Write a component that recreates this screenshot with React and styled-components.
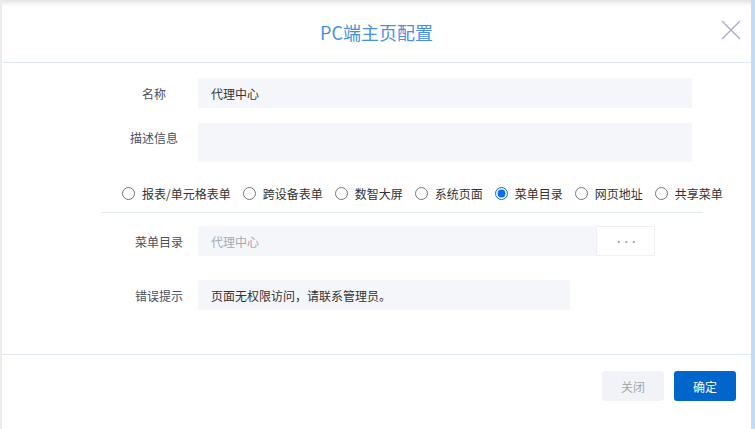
import React from 'react'
import styled, { createGlobalStyle } from 'styled-components'

const GlobalStyle = createGlobalStyle`
  html, body {
    margin: 0;
    padding: 0;
    background: #c3dbf3;
  }
  body {
    font-family: "Noto Sans CJK SC", "Noto Sans", sans-serif;
    font-size: 12px;
    color: #333;
  }
`

const Page = styled.div`
  width: 755px;
  height: 429px;
  display: flex;
  overflow: hidden;
`

const Dialog = styled.div`
  margin-left: 2px;
  width: 749px;
  height: 429px;
  display: flex;
  flex-direction: column;
  background: linear-gradient(#e4e4e4 0, #fafafa 5px, #fff 7px);
  box-shadow: -2px 0 0 #ececec;
`

const Header = styled.div`
  height: 62px;
  flex: none;
  display: flex;
  align-items: center;
  justify-content: center;
  position: relative;
  border-bottom: 1px solid #e2e8f0;
`

const Title = styled.div`
  font-size: 18px;
  color: #4a90e2;
  padding-top: 2px;
`

const Close = styled.button`
  position: absolute;
  right: 10px;
  top: 20px;
  width: 20px;
  height: 20px;
  padding: 0;
  border: 0;
  background: none;
  cursor: pointer;
`

const Body = styled.div`
  flex: 1;
  padding-top: 15px;
  border-bottom: 1px solid #e2e8f0;
`

const Row = styled.div`
  display: flex;
  align-items: ${p => (p.$top ? 'flex-start' : 'center')};
  margin-bottom: ${p => p.$gap || 0}px;
`

const Label = styled.div`
  width: ${p => p.$w}px;
  flex: none;
  text-align: right;
  color: #4a4f5c;
  padding-right: ${p => p.$pr}px;
  padding-top: ${p => (p.$top ? 6 : 0)}px;
  box-sizing: border-box;
`

const Field = styled.div`
  width: ${p => p.$w}px;
  height: ${p => p.$h || 30}px;
  box-sizing: border-box;
  background: #f5f6fa;
  border-radius: 2px;
  padding: 0 13px;
  display: flex;
  align-items: center;
  color: ${p => (p.$muted ? '#a6a9b0' : '#333')};
`

const Picker = styled.div`
  display: flex;
`

const PickButton = styled.div`
  width: 59px;
  height: 30px;
  box-sizing: border-box;
  border: 1px solid #eef0f4;
  background: #fff;
  display: flex;
  align-items: center;
  justify-content: center;
  color: #8f95a3;
  font-size: 9px;
  letter-spacing: -1.5px;
`

const Radios = styled.div`
  display: flex;
  align-items: center;
  margin: 0 48px 13px 100px;
  padding: 23px 0 10px 20px;
  border-bottom: 1px solid #e2e8f0;
`

const RadioItem = styled.label`
  display: flex;
  align-items: center;
  margin-right: 12px;
  white-space: nowrap;
  color: #333;
`

const Radio = styled.input`
  width: 13px;
  height: 13px;
  margin: 0 7px 0 0;
  accent-color: #0a6cf0;
`

const Footer = styled.div`
  height: 74px;
  flex: none;
  display: flex;
  justify-content: flex-end;
  align-items: flex-start;
  padding: 16px 15px 0 0;
  box-sizing: border-box;
  gap: 10px;
`

const Button = styled.button`
  width: 62px;
  height: 30px;
  border: 0;
  border-radius: 3px;
  font-family: inherit;
  font-size: 12px;
  background: ${p => (p.$primary ? '#0066cc' : '#f2f3f7')};
  color: ${p => (p.$primary ? '#fff' : '#a5a8ae')};
`

const types = ['报表/单元格表单', '跨设备表单', '数智大屏', '系统页面', '菜单目录', '网页地址', '共享菜单']

export default function App() {
  return (
    <>
      <GlobalStyle />
      <Page>
        <Dialog>
          <Header>
            <Title>PC端主页配置</Title>
            <Close aria-label="close">
              <svg width="20" height="20" viewBox="0 0 20 20">
                <path d="M1 1L19 19M19 1L1 19" stroke="#a7a7cb" strokeWidth="1.3" fill="none" />
              </svg>
            </Close>
          </Header>
          <Body>
            <Row $gap={15}>
              <Label $w={196} $pr={32}>名称</Label>
              <Field $w={494}>代理中心</Field>
            </Row>
            <Row $top>
              <Label $w={196} $pr={20} $top>描述信息</Label>
              <Field $w={494} $h={39} />
            </Row>
            <Radios>
              {types.map(t => (
                <RadioItem key={t}>
                  <Radio type="radio" name="type" readOnly checked={t === '菜单目录'} />
                  {t}
                </RadioItem>
              ))}
            </Radios>
            <Row $gap={24}>
              <Label $w={196} $pr={15}>菜单目录</Label>
              <Picker>
                <Field $w={398} $muted>代理中心</Field>
                <PickButton>···</PickButton>
              </Picker>
            </Row>
            <Row>
              <Label $w={196} $pr={15}>错误提示</Label>
              <Field $w={372}>页面无权限访问，请联系管理员。</Field>
            </Row>
          </Body>
          <Footer>
            <Button>关闭</Button>
            <Button $primary>确定</Button>
          </Footer>
        </Dialog>
      </Page>
    </>
  )
}
